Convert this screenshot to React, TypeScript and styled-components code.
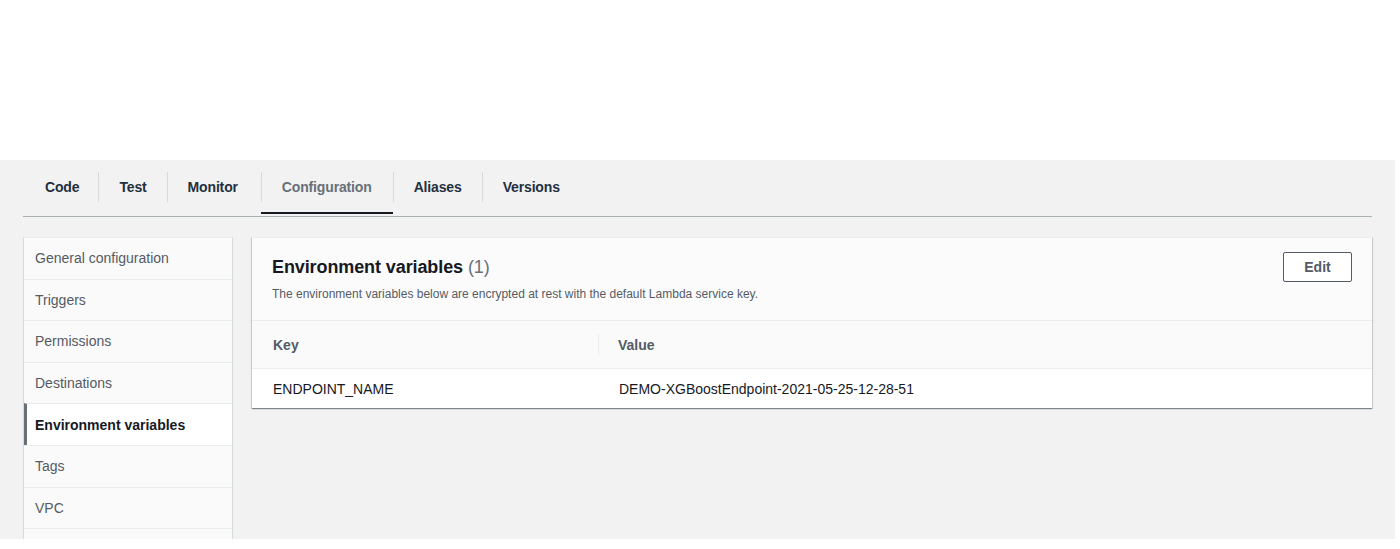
import React from "react";
import styled, { createGlobalStyle } from "styled-components";

const Global = createGlobalStyle`
  html, body { margin: 0; padding: 0; background: #ffffff; }
  body { font-family: "Liberation Sans", Arial, sans-serif; color: #16191f; }
  * { box-sizing: border-box; }
`;

const Section = styled.div`
  width: 1395px;
  height: 379px;
  margin-top: 160px;
  background: #f2f2f2;
  overflow: hidden;
  padding: 0 23px;
`;

const TabStrip = styled.div`
  display: flex;
  padding-top: 12px;
  border-bottom: 1px solid #aab1b3;
`;

const Tab = styled.div<{ $active?: boolean }>`
  padding-bottom: 10px;
  border-bottom: 2px solid ${(p) => (p.$active ? "#16191f" : "transparent")};
  margin-bottom: 2px;
`;

const TabLabel = styled.div<{ $first?: boolean; $active?: boolean; $extra?: number }>`
  height: 30px;
  line-height: 30px;
  padding: 0 ${(p) => 20 + (p.$extra ?? 0)}px 0 ${(p) => (p.$first ? "21px" : "20px")};
  border-left: 1px solid ${(p) => (p.$first ? "transparent" : "#d5dbdb")};
  font-size: 14px;
  font-weight: 700;
  color: ${(p) => (p.$active ? "#687078" : "#232f3e")};
  letter-spacing: -0.15px;
`;

const Body = styled.div`
  display: flex;
  gap: 19px;
  margin-top: 20px;
  align-items: flex-start;
`;

const Nav = styled.div`
  width: 210px;
  border-left: 1px solid #d5dbdb;
  border-right: 1px solid #d5dbdb;
  flex-shrink: 0;
`;

const NavItem = styled.div<{ $active?: boolean }>`
  height: 41.6px;
  display: flex;
  align-items: center;
  padding-left: ${(p) => (p.$active ? "8px" : "11px")};
  border-left: ${(p) => (p.$active ? "3px solid #687078" : "0")};
  border-top: 1px solid #eaeded;
  background: ${(p) => (p.$active ? "#ffffff" : "#fafafa")};
  font-size: 14px;
  font-weight: ${(p) => (p.$active ? 700 : 400)};
  color: ${(p) => (p.$active ? "#16191f" : "#545b64")};
  white-space: nowrap;
`;

const Panel = styled.div`
  flex: 1;
  background: #ffffff;
  box-shadow: 0 1px 1px 0 rgba(0, 28, 36, 0.35), 1px 1px 1px 0 rgba(0, 28, 36, 0.12),
    -1px 1px 1px 0 rgba(0, 28, 36, 0.12);
  border-top: 1px solid #eaeded;
`;

const PanelHeader = styled.div`
  background: #fbfbfb;
  padding: 14px 20px 18px;
  border-bottom: 1px solid #eaeded;
`;

const HeaderRow = styled.div`
  display: flex;
  align-items: center;
  justify-content: space-between;
`;

const Title = styled.h2`
  margin: 0;
  font-size: 18px;
  line-height: 22px;
  font-weight: 700;
  color: #16191f;
  letter-spacing: -0.1px;
`;

const Count = styled.span`
  font-weight: 400;
  color: #687078;
`;

const Description = styled.p`
  margin: 4px 0 0;
  font-size: 12px;
  line-height: 16px;
  color: #545b64;
`;

const Button = styled.button`
  width: 69px;
  height: 30px;
  border: 1px solid #545b64;
  border-radius: 2px;
  background: #ffffff;
  font-family: "Liberation Sans", Arial, sans-serif;
  font-size: 14px;
  font-weight: 700;
  color: #545b64;
  padding: 0;
`;

const Grid = styled.div`
  display: grid;
  grid-template-columns: 346px 1fr;
`;

const HeadCell = styled.div<{ $sep?: boolean }>`
  height: 48px;
  display: flex;
  align-items: center;
  padding-left: ${(p) => (p.$sep ? "20px" : "21px")};
  background: #fafafa;
  border-bottom: 1px solid #eaeded;
  font-size: 14px;
  font-weight: 700;
  color: #545b64;
  position: relative;
  &::before {
    content: "";
    display: ${(p) => (p.$sep ? "block" : "none")};
    position: absolute;
    left: 0;
    top: 13px;
    bottom: 13px;
    border-left: 1px solid #eaeded;
  }
`;

const Cell = styled.div`
  height: 39px;
  display: flex;
  align-items: center;
  padding-left: 21px;
  font-size: 14px;
  color: #16191f;
`;

const tabs: { label: string; extra?: number }[] = [
  { label: "Code", extra: -1 },
  { label: "Test" },
  { label: "Monitor", extra: 3 },
  { label: "Configuration", extra: 1 },
  { label: "Aliases" },
  { label: "Versions" },
];
const navItems = [
  "General configuration",
  "Triggers",
  "Permissions",
  "Destinations",
  "Environment variables",
  "Tags",
  "VPC",
  "",
];

export default function App() {
  return (
    <>
      <Global />
      <Section>
        <TabStrip>
          {tabs.map((t, i) => (
            <Tab key={t.label} $active={t.label === "Configuration"}>
              <TabLabel $first={i === 0} $active={t.label === "Configuration"} $extra={t.extra}>
                {t.label}
              </TabLabel>
            </Tab>
          ))}
        </TabStrip>
        <Body>
          <Nav>
            {navItems.map((n, i) => (
              <NavItem key={i} $active={n === "Environment variables"}>
                {n}
              </NavItem>
            ))}
          </Nav>
          <Panel>
            <PanelHeader>
              <HeaderRow>
                <Title>
                  Environment variables <Count>(1)</Count>
                </Title>
                <Button>Edit</Button>
              </HeaderRow>
              <Description>
                The environment variables below are encrypted at rest with the default Lambda service key.
              </Description>
            </PanelHeader>
            <Grid>
              <HeadCell>Key</HeadCell>
              <HeadCell $sep>Value</HeadCell>
              <Cell>ENDPOINT_NAME</Cell>
              <Cell>DEMO-XGBoostEndpoint-2021-05-25-12-28-51</Cell>
            </Grid>
          </Panel>
        </Body>
      </Section>
    </>
  );
}
